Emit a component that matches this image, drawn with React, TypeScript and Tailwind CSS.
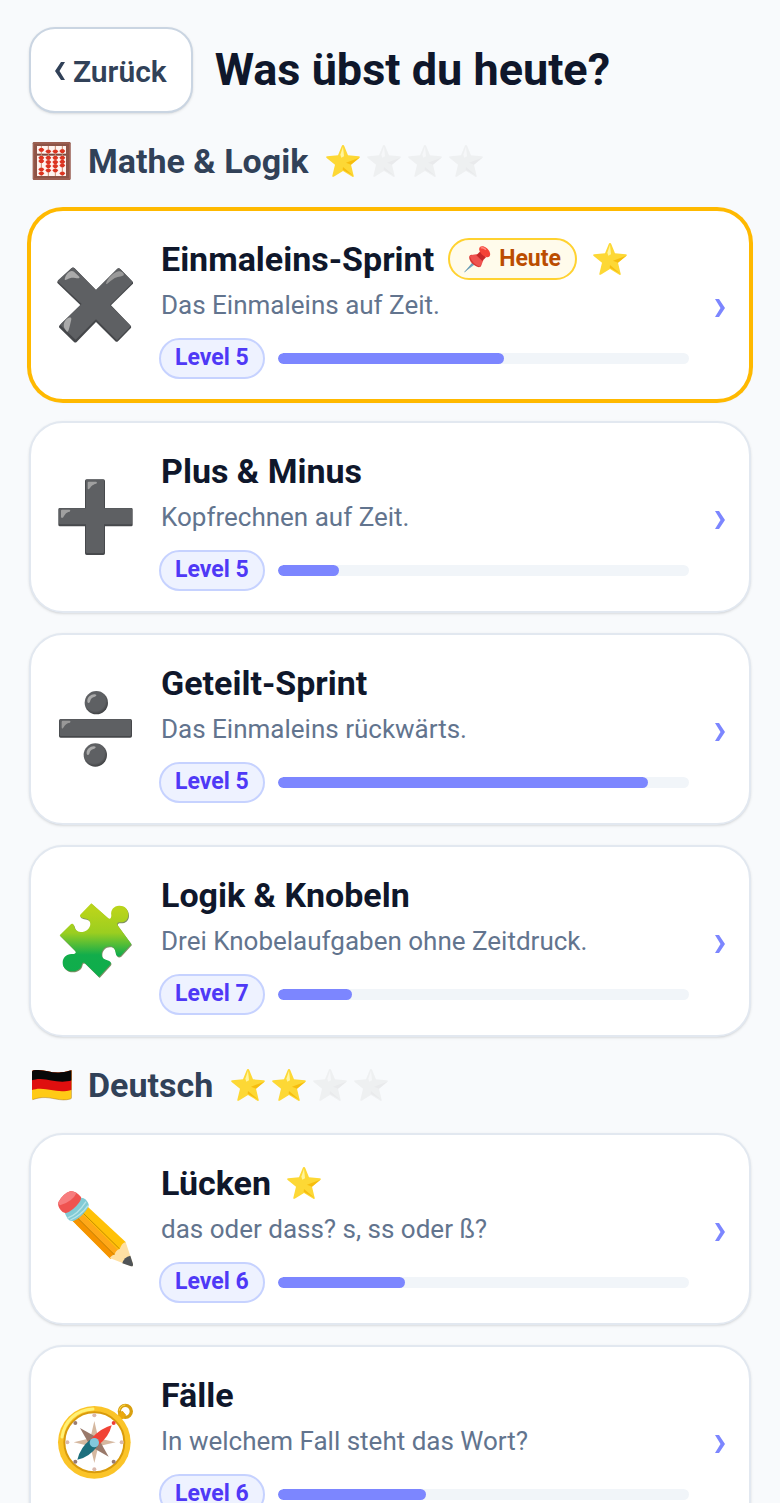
import type { ReactNode } from "react"
import clsx from "clsx"

type Exercise = {
  title: string
  description: string
  level: number
  progress: number
  icon: ReactNode
  today?: boolean
  star?: boolean
}

type Subject = {
  name: string
  icon: ReactNode
  stars: number
  exercises: Exercise[]
}

const Star = ({ muted = false }: { muted?: boolean }) => (
  <svg
    viewBox="977 429 102 102"
    className={clsx("size-[34px] shrink-0", muted && "opacity-25 grayscale")}
    aria-hidden="true"
  >
    <path
      d="M1028 432q3 0 4 4l11 27 32 3q6 1 2 5l-25 20 8 33q1 6-4 3l-28-17-28 17q-5 2-4-3l8-33-25-20q-4-4 2-5l32-3 11-27q1-4 4-4z"
      fill="#fdd835"
    />
    <path d="M1077 470l-25 21-15-6zM1060 525l-33-19 1-8z" fill="#f4b400" opacity=".75" />
    <path d="M1028 437l3 29-8 4-3-9z" fill="#fff59d" />
  </svg>
)

const PinIcon = () => (
  <svg viewBox="138 136 81 81" className="size-[27px] shrink-0" aria-hidden="true">
    <path d="M139 215l25-31 7 7z" fill="#78a9c0" />
    <path d="M139 215l26-27" stroke="#5b8fa8" strokeWidth="2" />
    <ellipse cx="172" cy="181" rx="12" ry="23" transform="rotate(-45 172 181)" fill="#d93431" />
    <path d="M155 166q11-6 23-5l18 18q-3 12-11 19-22-8-30-32z" fill="#ef5350" />
    <path d="M175 164l12-12 17 18-11 11z" fill="#c62828" />
    <ellipse cx="200" cy="153" rx="12" ry="20" transform="rotate(-45 200 153)" fill="#f44336" />
    <path d="M188 142q8-3 16 5" stroke="#ff8a80" strokeWidth="4" fill="none" />
  </svg>
)

// bead heights per rod, the first one sits above the bar
const beads = [
  { x: 124, ys: [446, 470, 480, 505, 517] },
  { x: 145, ys: [451, 470, 483, 495, 508] },
  { x: 166, ys: [451, 470, 483, 495, 508] },
  { x: 187, ys: [450, 470, 482, 493, 517] },
]

const AbacusIcon = () => (
  <svg viewBox="96 420 120 120" className="size-10 shrink-0" aria-hidden="true">
    <rect x="98" y="423" width="114" height="114" rx="4" fill="#8d5447" />
    <rect x="101" y="426" width="108" height="108" rx="2" fill="none" stroke="#a9695a" strokeWidth="3" />
    <rect x="111" y="435" width="87" height="90" fill="#fff3ef" />
    <path d="M111 461h87" stroke="#7b463b" strokeWidth="6" />
    {beads.map(({ x, ys }) => (
      <g key={x}>
        <path d={`M${x} 435v90`} stroke="#c98a6c" strokeWidth="3" />
        {ys.map((y) => (
          <path key={y} d={`M${x - 9} ${y}l5-5h8l5 5-5 6h-8z`} fill="#dc3420" />
        ))}
      </g>
    ))}
  </svg>
)

const GermanyIcon = () => (
  <svg viewBox="36 45 120 120" className="size-10 shrink-0" aria-hidden="true">
    <defs>
      <clipPath id="flag">
        <path d="M36 66q0-4 5-5c32-5 52 10 82 6 13-1 22-4 32-6v81q0 4-4 5c-30 9-55-7-87-4-10 1-17 3-26 6q-2 0-2-3z" />
      </clipPath>
    </defs>
    <g clipPath="url(#flag)">
      <rect x="36" y="55" width="120" height="100" fill="#ffca16" />
      <path d="M36 50h120v69c-40 12-65-4-97-3-9 0-16 2-23 4z" fill="#df0f0f" />
      <path d="M36 50h120v41c-40 12-65-5-97-4-9 0-16 2-23 4z" fill="#080808" />
    </g>
    <path
      d="M155 61v81q0 4-4 5c-30 9-55-7-87-4-10 1-17 3-26 6"
      fill="none"
      stroke="#93600c"
      strokeWidth="2"
      opacity=".6"
    />
  </svg>
)

const TimesIcon = () => (
  <svg viewBox="111 201 228 228" className="size-[76px] shrink-0" aria-hidden="true">
    <path
      d="M114 243l41-39q4-3 8 0l65 66 64-64q4-3 8 0l38 39q4 4 0 7l-65 64 59 61q3 4 0 8l-38 39q-4 3-8 0l-58-58-58 60q-4 3-8 0l-43-42q-4-4 0-8l62-61-68-65q-3-4 1-7z"
      fill="#45474a"
    />
    <path
      d="M114 241l41-37q4-3 8 0l65 66 64-64q4-3 8 0l36 37q3 3 0 6l-66 66 60 60q3 3 0 6l-39 40-63-63-61 61-44-42q-3-3 0-6l62-59-71-67q-2-2 0-4z"
      fill="#5e6063"
    />
    <path d="M134 238c3-17 17-30 28-23l16 15c4 10-17 1-26 4-9 2-18 9-18 4z" fill="#aaa" />
    <path d="M258 251c4-17 24-34 38-37 9-1 18 7 15 12-8 5-19 3-31 11-10 6-19 18-22 14z" fill="#999" />
    <path d="M133 384c-5-11 2-27 13-31 10-2 9 3 6 14-3 12-6 31-11 28q-4-4-8-11z" fill="#aaa" />
  </svg>
)

const PlusIcon = () => (
  <svg viewBox="111 177 228 228" className="size-[76px] shrink-0" aria-hidden="true">
    <path
      d="M200 178h50q5 0 5 5v81h79q4 0 4 4v46q0 5-4 5h-79v81q0 5-5 5h-50q-5 0-5-5v-81h-75q-5 0-5-5v-46q0-4 5-4h75v-81q0-5 5-5z"
      fill="#47494c"
    />
    <path
      d="M200 179h48q4 0 4 4v82h80q4 0 4 4v40q0 4-4 4h-80v82q0 4-4 4h-46q-4 0-4-4v-82h-77q-4 0-4-4v-40q0-4 4-4h77v-82q0-4 2-4z"
      fill="#5e6063"
    />
    <path d="M203 188q0-3 3-3h22q5 1 1 6c-13 2-17 11-22 16q-4 2-4-3zM123 272q0-3 3-3h22q5 1 1 6c-13 2-15 11-20 18q-6 2-6-3z" fill="#a0a0a0" />
  </svg>
)

const DivideIcon = () => (
  <svg viewBox="111 154 228 228" className="size-[76px] shrink-0" aria-hidden="true">
    <defs>
      <radialGradient id="ball" cx=".45" cy=".42" r=".58">
        <stop offset=".75" stopColor="#5e6063" />
        <stop offset="1" stopColor="#404244" />
      </radialGradient>
    </defs>
    <circle cx="229" cy="189" r="35" fill="url(#ball)" />
    <circle cx="226" cy="346" r="35" fill="url(#ball)" />
    <rect x="117" y="238" width="219" height="56" rx="5" fill="#45474a" />
    <rect x="119" y="239" width="214" height="50" rx="4" fill="#5e6063" />
    <path d="M125 247q0-4 4-4h20q5 1 1 6c-13 2-17 10-21 17q-4 2-4-3z" fill="#999" />
    <path
      d="M202 185c-1-13 12-22 22-21 8 1 6 6-2 8-8 3-10 7-12 14-3 6-8 4-8-1zM200 341c-1-13 12-22 22-21 8 1 6 6-2 8-8 3-10 7-12 14-3 6-8 4-8-1z"
      fill="#aaa"
    />
  </svg>
)

const PUZZLE =
  "M214 163l51 45c6 3 9-1 9-10-3-15 8-28 23-28 15-1 28 9 28 27 0 15-11 24-26 23-10 0-8 7-4 12l39 53-32 35c-7 5-14 1-15-8-2-13-7-20-18-20-13-1-24 10-24 23 0 15 10 16 21 20 8 4 8 8 3 14l-32 35-42-41c-6-5-9-1-10 6-3 11-15 19-28 18-18-1-29-11-29-26 0-16 12-27 28-26 10 1 15-4 8-11l-45-45 32-32c4-4 9-3 11 3 3 12 9 18 20 19 16 0 29-11 29-25 0-10-9-15-20-16-9-2-14-6-9-12z"

const PuzzleIcon = () => (
  <svg viewBox="111 162 228 228" className="size-[76px] shrink-0" aria-hidden="true">
    <defs>
      <linearGradient id="puzzle" x1="0" y1="0" x2="0" y2="1">
        <stop offset=".1" stopColor="#b8d41b" />
        <stop offset=".4" stopColor="#9bce20" />
        <stop offset=".7" stopColor="#12ad4b" />
        <stop offset="1" stopColor="#0ead4c" />
      </linearGradient>
    </defs>
    <path d={PUZZLE} transform="translate(2 3)" fill="#7d8f62" />
    <path d={PUZZLE} fill="url(#puzzle)" />
  </svg>
)

const PencilIcon = () => (
  <svg viewBox="111 126 228 228" className="size-[76px] shrink-0" aria-hidden="true">
    <path d="M158 216l46-42 113 105q4 31-46 50z" fill="#ffc107" />
    <path d="M158 216l13-11 113 113-13 11z" fill="#f59300" />
    <path d="M171 205l14-12 112 112-13 13z" fill="#ffa818" />
    <path d="M171 205l113 113M187 190l112 110" stroke="#a66a00" strokeWidth="2" />
    <path d="M269 327c5-7 8-9 15-10 2-9 7-15 15-17 4-10 8-18 18-21l22 66q1 8-6 7z" fill="#ffe0a3" />
    <path d="M331 320l8 25q1 8-6 7l-26-9q5-19 24-23z" fill="#505457" />
    <path d="M134 190q24-12 50-44 15 1 22 20 1 8-9 20-17 22-36 30-12 2-18-7-7-10-9-19z" fill="#82cbd5" />
    <path d="M143 207q29-9 55-49M151 213q31-13 53-43" stroke="#b8e4e9" strokeWidth="4" fill="none" />
    <path d="M115 160q12-25 37-34 17 0 31 18 2 6-6 17-18 24-39 31-8 2-16-9-10-12-7-23z" fill="#ef5350" />
    <path d="M115 160q12-25 37-34 10 1 17 7-11 25-49 36-6-4-5-9z" fill="#f77d7e" />
  </svg>
)

const CompassIcon = () => (
  <svg viewBox="111 192 228 228" className="size-[76px] shrink-0" aria-hidden="true">
    <path d="M294 228l12-12 12 12-15 15z" fill="#bd7f08" />
    <circle cx="316" cy="217" r="18" fill="none" stroke="#d9a010" strokeWidth="10" />
    <path d="M298 215c1-10 9-17 18-17" stroke="#ffdf51" strokeWidth="3" fill="none" />
    <path d="M292 232q8-13 16-16l9 12q-4 10-13 15z" fill="#eba90d" />
    <circle cx="223" cy="310" r="109" fill="#fbc428" />
    <circle cx="223" cy="310" r="90" fill="#fff" stroke="#d99b0c" strokeWidth="6" />
    <path d="M126 294c7-47 43-82 93-84" stroke="#fff176" strokeWidth="9" strokeLinecap="round" fill="none" />
    <g fill="#d9b8ad">
      <circle cx="223" cy="229" r="6" />
      <circle cx="223" cy="391" r="6" />
      <circle cx="142" cy="310" r="6" />
      <circle cx="305" cy="310" r="6" />
    </g>
    <g fill="#987c74">
      <circle cx="166" cy="252" r="6" />
      <circle cx="166" cy="368" r="6" />
      <circle cx="281" cy="368" r="6" />
    </g>
    <circle cx="281" cy="252" r="6" fill="#ef3e36" />
    <path d="M223 246l12 52 52 12-52 12-12 50-12-50-50-12 50-12z" fill="#d5b8a0" />
    <path d="M180 267l55 31 31 55-55-31z" fill="#99796a" />
    <path d="M275 259q-8 36-42 61l-20-20q26-31 62-41z" fill="#f14336" />
    <path d="M172 362q8-36 41-62l20 20q-25 35-61 42z" fill="#1d6f7d" />
    <circle cx="223" cy="311" r="14" fill="#82c8dc" />
  </svg>
)

// Both sit a little low in their box, on the text's x-height
const ChevronLeft = () => (
  <svg viewBox="0 0 10 20" className="h-5 w-[10px] shrink-0" fill="currentColor" aria-hidden="true">
    <path d="M6 1h4L4.500 10 10 19H6L0 10z" />
  </svg>
)

const ChevronRight = () => (
  <svg viewBox="0 0 10 24" className="h-6 w-[10px] shrink-0" fill="currentColor" aria-hidden="true">
    <path d="M0 6h4l6 9-6 9H0l5.500-9z" />
  </svg>
)

const subjects: Subject[] = [
  {
    name: "Mathe & Logik",
    icon: <AbacusIcon />,
    stars: 1,
    exercises: [
      {
        title: "Einmaleins-Sprint",
        description: "Das Einmaleins auf Zeit.",
        level: 5,
        progress: 55,
        icon: <TimesIcon />,
        today: true,
        star: true,
      },
      {
        title: "Plus & Minus",
        description: "Kopfrechnen auf Zeit.",
        level: 5,
        progress: 15,
        icon: <PlusIcon />,
      },
      {
        title: "Geteilt-Sprint",
        description: "Das Einmaleins rückwärts.",
        level: 5,
        progress: 90,
        icon: <DivideIcon />,
      },
      {
        title: "Logik & Knobeln",
        description: "Drei Knobelaufgaben ohne Zeitdruck.",
        level: 7,
        progress: 18,
        icon: <PuzzleIcon />,
      },
    ],
  },
  {
    name: "Deutsch",
    icon: <GermanyIcon />,
    stars: 2,
    exercises: [
      {
        title: "Lücken",
        description: "das oder dass? s, ss oder ß?",
        level: 6,
        progress: 31,
        icon: <PencilIcon />,
        star: true,
      },
      {
        title: "Fälle",
        description: "In welchem Fall steht das Wort?",
        level: 6,
        progress: 36,
        icon: <CompassIcon />,
      },
    ],
  },
]

const ExerciseCard = ({ exercise }: { exercise: Exercise }) => (
  <button
    type="button"
    className={clsx(
      "flex w-full items-center gap-[26px] rounded-[34px] border-2 bg-white py-5 pr-6 pl-[26px] text-left shadow-sm",
      exercise.today ? "border-amber-400 ring-2 ring-amber-400" : "border-slate-200"
    )}
  >
    {exercise.icon}
    <div className="min-w-0 flex-1">
      <div className="flex h-14 items-center pl-[2px]">
        <h3 className="text-[34px] font-bold text-slate-900">{exercise.title}</h3>
        {exercise.today && (
          <span className="ml-[14px] flex h-[42px] items-center gap-2 rounded-full border-2 border-amber-300 bg-amber-50 px-[14px] text-[23px] font-bold text-amber-700">
            <PinIcon />
            Heute
          </span>
        )}
        {exercise.star && (
          <span className="ml-4">
            <Star />
          </span>
        )}
      </div>
      <p className="pl-[2px] text-[26px] leading-9 text-slate-500">{exercise.description}</p>
      <div className="mt-[15px] flex items-center gap-[13px]">
        <span className="flex h-[41px] items-center rounded-full border-2 border-indigo-200 bg-indigo-50 px-[14px] text-[23px] font-bold text-indigo-600">
          Level {exercise.level}
        </span>
        <div
          role="progressbar"
          aria-valuenow={exercise.progress}
          aria-label={exercise.title}
          className="h-[11px] flex-1 overflow-hidden rounded-full bg-slate-100"
        >
          <div
            className="h-full rounded-full bg-indigo-400"
            style={{ width: `${exercise.progress}%` }}
          />
        </div>
      </div>
    </div>
    <span className="text-indigo-400">
      <ChevronRight />
    </span>
  </button>
)

const App = () => {
  return (
    <main className="min-h-screen bg-slate-50 px-[29px] pt-[27px] font-['Roboto',sans-serif]">
      <header className="flex items-center gap-[22px]">
        <button
          type="button"
          className="flex h-[86px] items-center gap-2 rounded-[26px] border-2 border-slate-300 bg-white px-6 pt-[2px] text-[30px] font-semibold text-slate-700 shadow-sm"
        >
          <ChevronLeft />
          Zurück
        </button>
        <h1 className="text-[45px] font-bold text-slate-900">Was übst du heute?</h1>
      </header>
      {subjects.map((subject) => (
        <section key={subject.name}>
          <div className="flex h-24 items-center pl-[3px]">
            {subject.icon}
            <h2 className="ml-4 text-[34px] font-bold text-slate-700">{subject.name}</h2>
            <div className="ml-[18px] flex gap-[7px]">
              {[0, 1, 2, 3].map((i) => (
                <Star key={i} muted={i >= subject.stars} />
              ))}
            </div>
          </div>
          <div className="flex flex-col gap-5">
            {subject.exercises.map((exercise) => (
              <ExerciseCard key={exercise.title} exercise={exercise} />
            ))}
          </div>
        </section>
      ))}
    </main>
  )
}

export default App
